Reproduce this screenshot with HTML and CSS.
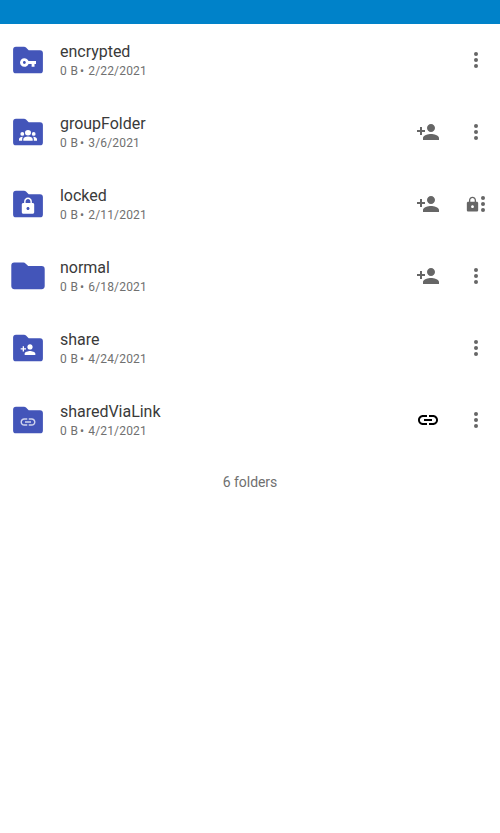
FILE: index.html
```html
<!DOCTYPE html>
<html lang="en">
<head>
<meta charset="utf-8">
<title>Files</title>
<link rel="stylesheet" href="styles.css">
</head>
<body>
<svg class="defs" aria-hidden="true">
  <symbol id="folder" viewBox="0 0 40 40"><path d="M8 6.700h8q1.200 0 2 .8l2.700 2.700H32q2.900 0 2.900 2.900V30.400q0 2.900-2.900 2.900H8q-2.900 0-2.900-2.900V9.600q0-2.900 2.900-2.900z"/></symbol>
  <symbol id="folder-wide" viewBox="0 0 40 40"><path d="M6.200 6.600H15.500q1.200 0 2 .8l2.700 2.700H33.600q3.100 0 3.100 3.100V30.100q0 3.100-3.100 3.100H6.400q-3.100 0-3.100-3.100V9.600q0-3 2.900-3z"/></symbol>
  <symbol id="key" viewBox="0 0 24 24"><path d="M12.650 10C11.830 7.670 9.610 6 7 6c-3.310 0-6 2.690-6 6s2.690 6 6 6c2.610 0 4.830-1.670 5.650-4H17v4h4v-4h2v-4H12.650zM7 14c-1.100 0-2-.9-2-2s.9-2 2-2 2 .9 2 2-.9 2-2 2z"/></symbol>
  <symbol id="lock" viewBox="0 0 24 24"><path d="M18 8h-1V6c0-2.760-2.240-5-5-5S7 3.240 7 6v2H6c-1.100 0-2 .9-2 2v10c0 1.100.9 2 2 2h12c1.100 0 2-.9 2-2V10c0-1.100-.9-2-2-2zm-6 9c-1.100 0-2-.9-2-2s.9-2 2-2 2 .9 2 2-.9 2-2 2zm3.100-9H8.900V6c0-1.710 1.390-3.100 3.100-3.100 1.710 0 3.100 1.390 3.100 3.100v2z"/></symbol>
  <symbol id="person-add" viewBox="0 0 24 24"><path d="M15 12c2.210 0 4-1.790 4-4s-1.790-4-4-4-4 1.790-4 4 1.790 4 4 4zm-9-2V7H4v3H1v2h3v3h2v-3h3v-2H6zm9 4c-2.670 0-8 1.340-8 4v2h16v-2c0-2.660-5.330-4-8-4z"/></symbol>
  <symbol id="link" viewBox="0 0 24 24"><path d="M3.900 12c0-1.710 1.390-3.100 3.100-3.100h4V7H7c-2.760 0-5 2.240-5 5s2.240 5 5 5h4v-1.900H7c-1.710 0-3.100-1.390-3.100-3.100zM8 13h8v-2H8v2zm9-6h-4v1.900h4c1.710 0 3.100 1.390 3.100 3.100s-1.390 3.100-3.100 3.100h-4V17h4c2.760 0 5-2.240 5-5s-2.240-5-5-5z"/></symbol>
  <symbol id="group" viewBox="0 0 18 11"><ellipse cx="9" cy="2.800" rx="3" ry="2.700"/><circle cx="3.300" cy="3.900" r="1.900"/><circle cx="14.700" cy="3.900" r="1.900"/><path d="M4.300 10.700V9.200C4.300 7.300 6.500 6.400 9 6.400s4.700.9 4.700 2.800v1.500zM0 10.700V9.200C0 7.600 1.500 6.700 3.900 6.700 3.300 7.500 3.200 8.200 3.200 9v1.700zM18 10.700V9.200c0-1.600-1.500-2.500-3.900-2.500.6.8.7 1.500.7 2.300v1.700z"/></symbol>
  <symbol id="more" viewBox="0 0 24 24"><circle cx="12" cy="6" r="2"/><circle cx="12" cy="12" r="2"/><circle cx="12" cy="18" r="2"/></symbol>
</svg>
<header class="status-bar"></header>
<main>
  <ul class="files">
    <li class="row">
      <svg class="folder"><use href="#folder"/><use class="mark" href="#key" x="11.300" y="13.800" width="17.400" height="17.400"/></svg>
      <div class="info"><div class="name">encrypted</div><div class="meta"><span>0 B</span><span class="dot">•</span><span>2/22/2021</span></div></div>
      <svg class="icon more"><use href="#more"/></svg>
    </li>
    <li class="row">
      <svg class="folder"><use href="#folder"/><use class="mark" href="#group" x="11" y="18" width="18" height="11"/></svg>
      <div class="info"><div class="name">groupFolder</div><div class="meta"><span>0 B</span><span class="dot">•</span><span>3/6/2021</span></div></div>
      <svg class="icon"><use href="#person-add"/></svg>
      <svg class="icon more"><use href="#more"/></svg>
    </li>
    <li class="row row-locked">
      <svg class="folder"><use href="#folder"/><use class="mark" href="#lock" x="10.700" y="12.800" width="18.600" height="18.600"/></svg>
      <div class="info"><div class="name">locked</div><div class="meta"><span>0 B</span><span class="dot">•</span><span>2/11/2021</span></div></div>
      <svg class="icon"><use href="#person-add"/></svg>
      <svg class="icon lock"><use href="#lock"/></svg>
      <svg class="icon more"><use href="#more"/></svg>
    </li>
    <li class="row">
      <svg class="folder"><use href="#folder-wide"/></svg>
      <div class="info"><div class="name">normal</div><div class="meta"><span>0 B</span><span class="dot">•</span><span>6/18/2021</span></div></div>
      <svg class="icon"><use href="#person-add"/></svg>
      <svg class="icon more"><use href="#more"/></svg>
    </li>
    <li class="row">
      <svg class="folder"><use href="#folder"/><use class="mark" href="#person-add" x="12" y="13.600" width="16" height="16"/></svg>
      <div class="info"><div class="name">share</div><div class="meta"><span>0 B</span><span class="dot">•</span><span>4/24/2021</span></div></div>
      <svg class="icon more"><use href="#more"/></svg>
    </li>
    <li class="row">
      <svg class="folder"><use href="#folder"/><use class="mark soft" href="#link" x="11" y="13" width="18" height="18"/></svg>
      <div class="info"><div class="name">sharedViaLink</div><div class="meta"><span>0 B</span><span class="dot">•</span><span>4/21/2021</span></div></div>
      <svg class="icon linked"><use href="#link"/></svg>
      <svg class="icon more"><use href="#more"/></svg>
    </li>
  </ul>
  <p class="summary">6 folders</p>
</main>
</body>
</html>
```
FILE: styles.css
```css
* {
  box-sizing: border-box;
}

body {
  margin: 0;
  min-height: 100vh;
  background: #fff;
  font-family: Roboto, sans-serif;
  color: #3a3a3a;
}

.defs {
  display: none;
}

.status-bar {
  height: 24px;
  background: #0082c9;
}

.files {
  margin: 0;
  padding: 0;
  list-style: none;
}

.row {
  display: flex;
  align-items: center;
  height: 72px;
  padding: 0 12px 0 8px;
}

.folder {
  flex: none;
  width: 40px;
  height: 40px;
  fill: #4355b9;
}

.mark {
  fill: #fff;
}

.soft {
  opacity: 0.75;
}

.info {
  flex: 1;
  margin-left: 12px;
}

.name {
  font-size: 16px;
  line-height: 20px;
  letter-spacing: -0.02px;
}

.meta {
  display: flex;
  font-size: 12px;
  line-height: 16px;
  letter-spacing: 0.16px;
  word-spacing: 0.4px;
  margin-top: 1px;
  color: #707070;
}

.dot {
  margin: 0 4px 0 2px;
}

.icon {
  flex: none;
  width: 24px;
  height: 24px;
  fill: #666;
}

.more {
  margin-left: 24px;
}

.linked {
  fill: #000;
}

.row-locked {
  padding-right: 5px;
}

.row .lock {
  width: 17px;
  height: 17px;
  margin-left: 24px;
}

.lock + .more {
  margin-left: -10px;
}

.summary {
  margin: 16px 0 0;
  font-size: 14px;
  line-height: 20px;
  letter-spacing: -0.05px;
  text-align: center;
  color: #707070;
}
```
